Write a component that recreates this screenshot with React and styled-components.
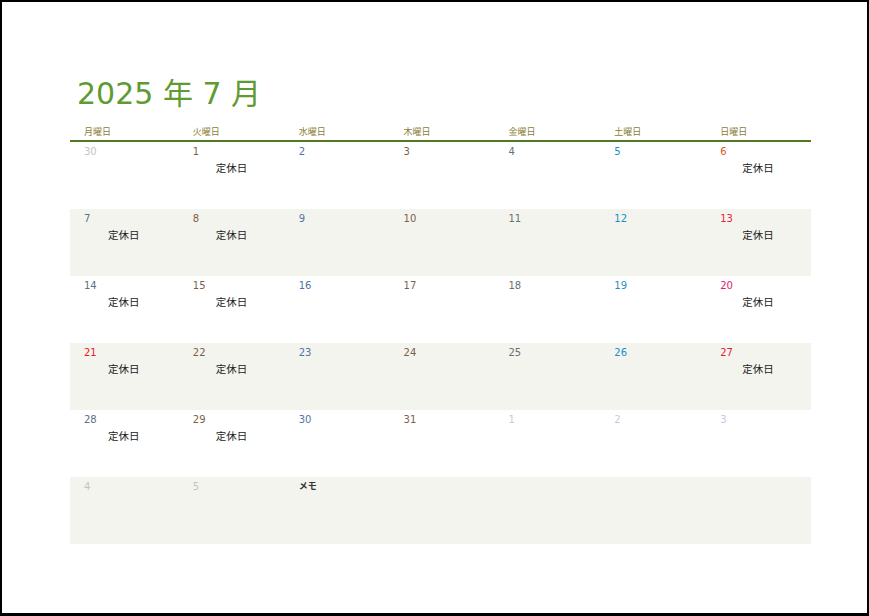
import React from "react";
import styled, { createGlobalStyle } from "styled-components";

const G = createGlobalStyle`
  html,body{margin:0;padding:0;background:#fff;}
  body{font-family:"Noto Sans CJK JP","DejaVu Sans",sans-serif;}
`;
const Frame = styled.div`
  width:865px;height:611px;border:2px solid #000;border-right-width:3px;border-bottom-width:3px;
  box-sizing:content-box;display:flex;flex-direction:column;
`;
const Inner = styled.div`padding:72px 0 0 68px;width:741px;`;
const Title = styled.h1`
  margin:0 0 12px 7px;font-weight:400;font-size:30px;line-height:40px;color:#5f9a33;
  font-family:"DejaVu Sans","Noto Sans CJK JP",sans-serif;
`;
const Head = styled.div`
  display:grid;grid-template-columns:repeat(7,1fr);border-bottom:2px solid #4f7a22;
`;
const HCell = styled.div`
  font-size:9px;color:#8a7d34;padding:0 0 2px ${p=>p.$pl}px;line-height:12px;
`;
const Grid = styled.div`display:grid;grid-template-columns:repeat(7,1fr);`;
const Row = styled.div`display:contents;`;
const Cell = styled.div`
  height:67px;background:${p=>p.$alt?"#f4f4ef":"#fff"};padding:3px 0 0 ${p=>p.$pl}px;box-sizing:border-box;
  font-family:"DejaVu Sans",sans-serif;
`;
const Num = styled.div`font-size:10px;line-height:14px;color:${p=>p.$c};`;
const Note = styled.div`
  font-size:10.5px;line-height:14px;color:#222;padding-left:${p=>p.$pl}px;margin-top:2px;
  font-family:"Noto Sans CJK JP",sans-serif;
`;
const Memo = styled.div`font-size:9px;font-weight:700;color:#333;margin-top:-1px;font-family:"Noto Sans CJK JP",sans-serif;`;

const colC=["#5b6f86","#7d5f48","#4d75a8","#7d5f48","#687070","#1a8fc8","#d85020"];
const pads=[14,17,17,16,15,15,15];
const days=["月曜日","火曜日","水曜日","木曜日","金曜日","土曜日","日曜日"];
const weeks=[[30,1,2,3,4,5,6],[7,8,9,10,11,12,13],[14,15,16,17,18,19,20],[21,22,23,24,25,26,27],[28,29,30,31,1,2,3],[4,5,null,null,null,null,null]];
const special={6:"#d9541e",13:"#e8203a",20:"#e0206a",27:"#e0203a",21:"#e8201e"};
const off={1:1,6:1,7:1,8:1,13:1,14:1,15:1,20:1,21:1,22:1,27:1,28:1,29:1};

export default function App(){
  return (<><G/><Frame><Inner>
    <Title>2025 年 7 月</Title>
    <Head>{days.map((d,i)=><HCell key={d} $pl={pads[i]}>{d}</HCell>)}</Head>
    <Grid>{weeks.map((w,ri)=><Row key={ri}>{w.map((d,ci)=>{
      const other=(ri===0&&d>20)||ri===5||(ri===4&&ci>3);
      let c=special[d]&&!other?special[d]:colC[ci];
      if(other) c=ri===4?"#c8c8e4":"#c4c4c4";
      return <Cell key={ci} $alt={ri%2===1} $pl={pads[ci]}>
        {d!==null&&<Num $c={c}>{d}</Num>}
        {ri===5&&ci===2&&<Memo>メモ</Memo>}
        {d!==null&&!other&&off[d]&&<Note $pl={ci===6?22:ci===1?23:24}>定休日</Note>}
      </Cell>;})}</Row>)}</Grid>
  </Inner></Frame></>);
}
